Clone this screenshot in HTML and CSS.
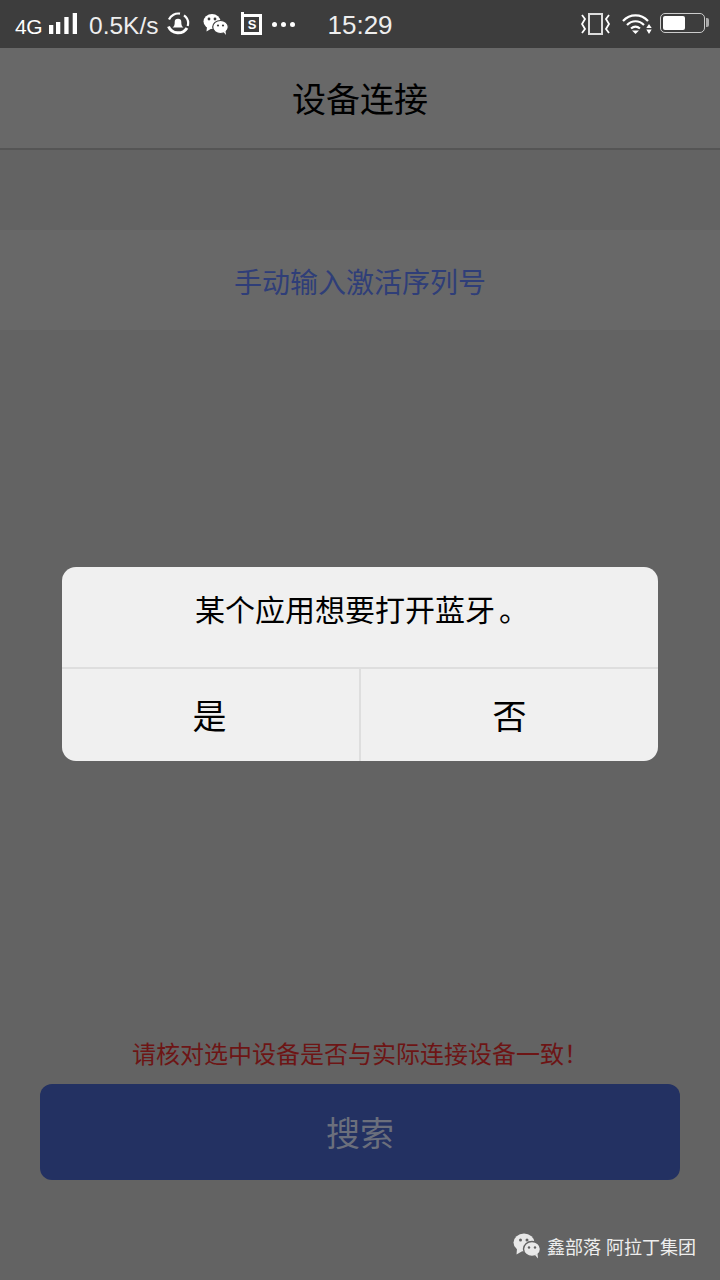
FILE: index.html
```html
<!DOCTYPE html>
<html lang="zh-CN">
<head>
  <meta charset="UTF-8" />
  <title>设备连接</title>
  <link rel="stylesheet" href="styles.css">
</head>
<body>
  <div class="status">
    <div class="status-left">
      <span class="net">4G</span>
      <svg class="bars" width="30" height="24" viewBox="0 0 30 24" fill="#fff"><rect x="1" y="13" width="4.300" height="9"/><rect x="8" y="10" width="4.300" height="12"/><rect x="16.300" y="5" width="4.300" height="17"/><rect x="24.700" y="1" width="4.300" height="21"/></svg>
      <span class="speed">0.5K/s</span>
      <svg class="ic-app" width="24" height="24" viewBox="0 0 24 24" fill="none" stroke="#fff"><path d="M3 7.500A10 10 0 0 1 14 1.700" stroke-width="2.200"/><path d="M18 3.300A10 10 0 0 1 21.700 14" stroke-width="2.200"/><path d="M2.500 14.500A10.500 10.500 0 0 0 21 16" stroke-width="3"/><path d="M6.500 15.500c2-1 2.200-3 2.200-5.500a3.300 3.300 0 0 1 6.600 0c0 2.500.2 4.500 2.200 5.500z" fill="#fff" stroke="none"/></svg>
      <svg class="ic-chat" width="26" height="24" viewBox="0 0 26 24"><ellipse cx="9" cy="9.500" rx="8.500" ry="7.500" fill="#fff"/><path d="M4 14.500l-.5 5 5-3z" fill="#fff"/><ellipse cx="17.500" cy="15" rx="7.800" ry="6.500" fill="#fff" stroke="#3d3d3d" stroke-width="1.200"/><path d="M20.500 20l2.500 3-.5-4z" fill="#fff"/><circle cx="6" cy="7" r="1.400" fill="#3d3d3d"/><circle cx="12" cy="7" r="1.400" fill="#3d3d3d"/><circle cx="15" cy="13.500" r="1.100" fill="#3d3d3d"/><circle cx="20" cy="13.500" r="1.100" fill="#3d3d3d"/></svg>
      <span class="ic-s">S</span>
      <span class="dots"><i></i><i></i><i></i></span>
      <span class="clock">15:29</span>
    </div>
    <div class="status-right">
      <svg width="30" height="24" viewBox="0 0 30 24" fill="none" stroke="#fff"><rect x="8" y="2" width="13" height="20" stroke="#ddd" stroke-width="2"/><path d="M1 3l3 4-3 5 3 5-3 4M28 3l-3 4 3 5-3 5 3 4" stroke-width="1.800"/></svg>
      <svg class="ic-wifi" width="30" height="24" viewBox="0 0 30 24" fill="none" stroke="#fff" stroke-width="2.200"><path d="M1 9C8 1.500 19 1.500 26 9"/><path d="M5 13C10 8 17 8 22 13"/><path d="M9 16.500c3-2.500 6-2.500 9 0"/><path d="M10 18.500h7l-3.500 3.500z" fill="#fff" stroke="none"/><path d="M27 12l-2.700 4h5.400zM27 22l-2.700-4.500h5.400z" fill="#fff" stroke="none"/></svg>
      <div class="battery"><div class="battery-fill"></div></div>
    </div>
  </div>

  <div class="nav">设备连接</div>
  <div class="manual">手动输入激活序列号</div>

  <div class="spacer"></div>

  <p class="warn">请核对选中设备是否与实际连接设备一致！</p>
  <div class="search">搜索</div>

  <div class="footer">
    <svg width="28" height="26" viewBox="0 0 28 26"><ellipse cx="11" cy="9.500" rx="10.500" ry="9" fill="#e8e8e8"/><path d="M4 15.500l-.5 6 6-3.500z" fill="#e8e8e8"/><ellipse cx="19" cy="16" rx="8.500" ry="7.500" fill="#e8e8e8" stroke="#636363" stroke-width="1.400"/><path d="M22 22l3 3.500-.5-5z" fill="#e8e8e8"/><circle cx="7.500" cy="7" r="1.500" fill="#636363"/><circle cx="14" cy="7" r="1.500" fill="#636363"/><circle cx="16" cy="14.500" r="1.200" fill="#636363"/><circle cx="22" cy="14.500" r="1.200" fill="#636363"/></svg>
    <span>鑫部落 阿拉丁集团</span>
  </div>

  <div class="overlay">
    <div class="dialog">
      <div class="dialog-msg">某个应用想要打开蓝牙<span class="stop">。</span></div>
      <div class="dialog-btns">
        <div class="dialog-btn">是</div>
        <div class="dialog-btn">否</div>
      </div>
    </div>
  </div>
</body>
</html>
```

FILE: styles.css
```css
html, body { height: 100%; }
body {
  margin: 0; height: 1280px; overflow: hidden;
  display: flex; flex-direction: column; position: relative;
  background: #636363; color: #000;
  font-family: "Liberation Sans", "Noto Sans CJK SC", sans-serif;
}

.status {
  height: 48px; flex: none; background: #3d3d3d; color: #fff;
  display: flex; justify-content: space-between; align-items: center;
  padding: 0 15px;
}
.status-left, .status-right { display: flex; align-items: center; }
.net { font-size: 21px; letter-spacing: -0.5px; margin-top: 5px; }
.bars { margin-left: 6px; }
.speed { font-size: 24.500px; margin-left: 11px; margin-top: 3px; color: #eee; }
.ic-app { margin-left: 8px; }
.ic-chat { margin-left: 13px; }
.ic-s {
  width: 15px; height: 15px; border: 3px solid #fff; margin-left: 12px; margin-top: 1px;
  font-size: 13px; font-weight: bold; line-height: 15px; text-align: center;
  position: relative;
}
.ic-s::before {
  content: ""; position: absolute; left: -3px; top: -5px;
  width: 3px; height: 3px; background: #fff;
}
.dots { display: flex; gap: 4px; margin-left: 10px; }
.dots i { width: 5px; height: 5px; border-radius: 50%; background: #fff; }
.clock { font-size: 26px; margin-left: 32px; margin-top: 3px; color: #eee; }
.status-right { gap: 11px; }
.ic-wifi { margin-right: -3px; }
.battery {
  box-sizing: border-box; width: 45px; height: 20px; margin-top: -2px;
  border: 1.500px solid #ccc; border-radius: 5px;
  padding: 1.500px; position: relative;
}
.battery::after {
  content: ""; position: absolute; right: -5px; top: 4px;
  width: 3px; height: 9px; background: #aaa; border-radius: 0 2px 2px 0;
}
.battery-fill { width: 22px; height: 14px; background: #fff; border-radius: 2px; }

.nav {
  height: 102px; flex: none; box-sizing: border-box; padding-bottom: 2px;
  background: #686868; border-bottom: 2px solid #555;
  display: flex; align-items: center; justify-content: center;
  font-size: 34px;
}
.manual {
  height: 100px; flex: none; box-sizing: border-box; padding-top: 2px;
  margin-top: 80px; background: #686868;
  display: flex; align-items: center; justify-content: center;
  font-size: 28px; color: #2f3e78;
}
.spacer { flex: 1; }

.warn {
  margin: 0 0 14px; text-align: center;
  font-size: 24px; line-height: 30px; color: #6d1515;
}
.search {
  height: 96px; flex: none; box-sizing: border-box; padding-bottom: 2px;
  margin: 0 40px 52px; border-radius: 12px;
  background: #233162; color: #6b6f7c; font-size: 34px;
  display: flex; align-items: center; justify-content: center;
}
.footer {
  height: 48px; flex: none; padding-right: 24px; margin-top: -10px; margin-bottom: 10px;
  display: flex; align-items: center; justify-content: flex-end; gap: 6px;
  color: #eee; font-size: 18px;
}

.overlay {
  position: absolute; inset: 0;
  display: flex; align-items: center; justify-content: center;
  padding-top: 48px; box-sizing: border-box;
}
.dialog { width: 596px; background: #f0f0f0; border-radius: 14px; overflow: hidden; }
.dialog-msg {
  height: 100px; font-size: 30px; text-align: center; line-height: 88px;
  border-bottom: 2px solid #dedede;
}
.stop { margin-left: 4px; margin-right: -4px; }
.dialog-btns { display: flex; height: 92px; }
.dialog-btn { flex: 1; font-size: 34px; text-align: center; line-height: 96px; }
.dialog-btn:first-child { text-indent: -2px; }
.dialog-btn + .dialog-btn { border-left: 2px solid #dedede; }
```
